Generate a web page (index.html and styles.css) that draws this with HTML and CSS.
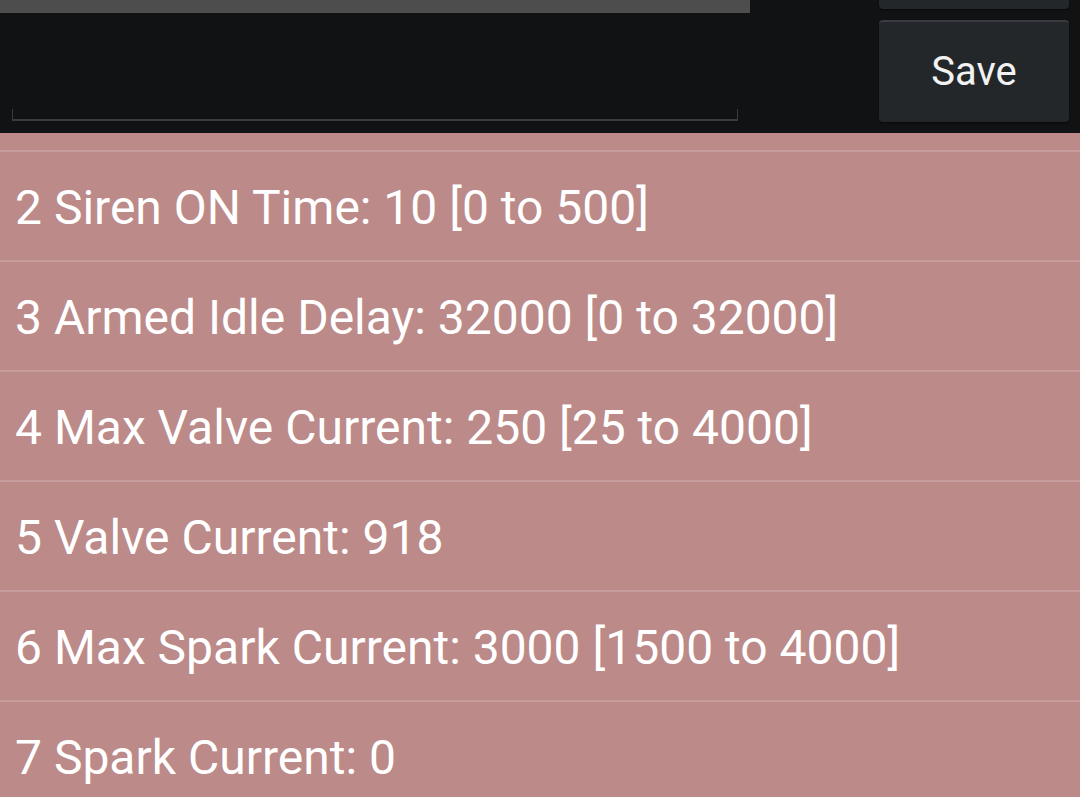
FILE: index.html
```html
<!DOCTYPE html>
<html>
<head>
<meta charset="utf-8">
<link rel="stylesheet" href="styles.css">
</head>
<body>
<div class="header">
  <div class="left">
    <div class="graybar"></div>
    <div class="input"></div>
  </div>
  <div class="right">
    <div class="btn btn-top"></div>
    <div class="btn btn-save">Save</div>
  </div>
</div>
<div class="list">
  <div class="row row-partial"></div>
  <div class="row">2 Siren ON Time: 10 [0 to 500]</div>
  <div class="row">3 Armed Idle Delay: 32000 [0 to 32000]</div>
  <div class="row">4 Max Valve Current: 250 [25 to 4000]</div>
  <div class="row">5 Valve Current: 918</div>
  <div class="row">6 Max Spark Current: 3000 [1500 to 4000]</div>
  <div class="row">7 Spark Current: 0</div>
</div>
</body>
</html>
```

FILE: styles.css
```css
* { box-sizing: border-box; }
html, body { margin: 0; padding: 0; }
body {
  width: 1080px;
  height: 797px;
  overflow: hidden;
  background: #bb8a89;
  font-family: Roboto, "Noto Sans", sans-serif;
}
.header {
  height: 133px;
  background: #111214;
  display: flex;
}
.left {
  width: 750px;
  display: flex;
  flex-direction: column;
}
.graybar {
  height: 13px;
  background: #4d4d4d;
}
.input {
  margin-left: 12px;
  margin-top: 96px;
  width: 726px;
  height: 12px;
  border-left: 1px solid #3a3b3d;
  border-right: 1px solid #3a3b3d;
  border-bottom: 2px solid #3a3b3d;
}
.right {
  margin-left: 129px;
  width: 190px;
  display: flex;
  flex-direction: column;
  gap: 11px;
}
.btn {
  background: #23272a;
  border-radius: 4px;
  box-shadow: 0 1px 2px rgba(0,0,0,0.6);
}
.btn-top {
  height: 9px;
  border-radius: 0 0 4px 4px;
}
.btn-save {
  height: 102px;
  border-top: 2px solid #383c40;
  color: #f2f2f2;
  font-size: 40px;
  display: flex;
  align-items: center;
  justify-content: center;
  padding-bottom: 2px;
}
.list {
  display: flex;
  flex-direction: column;
}
.row {
  height: 110px;
  border-top: 2px solid #c79e9d;
  color: #ffffff;
  font-size: 48px;
  display: flex;
  align-items: center;
  padding-left: 15px;
  padding-top: 3px;
  white-space: nowrap;
}
.row-partial {
  height: 17px;
  border-top: none;
  padding: 0;
}
```
